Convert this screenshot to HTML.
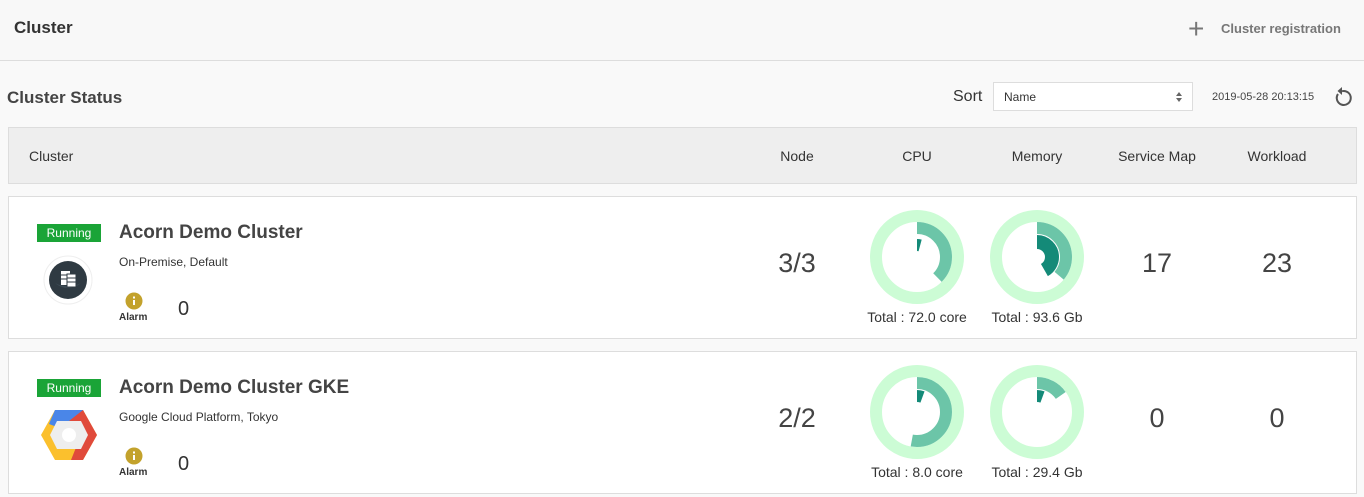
<!DOCTYPE html>
<html><head><style>
*{margin:0;padding:0;box-sizing:border-box}
body{width:1364px;height:497px;background:#f9f9f9;font-family:"Liberation Sans",sans-serif;color:#333;position:relative;overflow:hidden}
.a{position:absolute;white-space:nowrap}
.c{transform:translateX(-50%)}
.row{position:absolute;left:8px;width:1349px;height:143px;background:#fff;border:1px solid #ddd}
.run{position:absolute;background:#1aa437;color:#fff;font-size:12px;width:64px;height:18px;line-height:18px;text-align:center}
.big{font-size:27px;color:#444}
</style></head><body>
<div class="a" style="left:0;top:0;width:1364px;height:61px;border-bottom:1px solid #ddd;background:#f8f8f8"></div>
<div class="a" style="left:14px;top:18px;font-size:17px;color:#333;font-weight:bold">Cluster</div>
<div class="a" style="left:1188px;top:15px;font-size:28px;color:#777;line-height:28px">+</div>
<div class="a" style="left:1221px;top:21px;font-size:13px;color:#777;font-weight:bold">Cluster registration</div>

<div class="a" style="left:7px;top:88px;font-size:17px;font-weight:bold;color:#444">Cluster Status</div>
<div class="a" style="left:953px;top:88px;font-size:16px;color:#333">Sort</div>
<div class="a" style="left:993px;top:82px;width:200px;height:29px;background:#fff;border:1px solid #ddd;font-size:12px;line-height:28px;padding-left:10px;color:#333">Name
<svg style="position:absolute;right:10px;top:9px" width="6" height="10"><path d="M0 4L3 0L6 4Z M0 6L3 10L6 6Z" fill="#666"/></svg></div>
<div class="a" style="left:1212px;top:91px;font-size:11px;color:#444">2019-05-28 20:13:15</div>
<svg class="a" style="left:1332px;top:86px" width="22" height="22" viewBox="0 0 22 22"><path d="M6 8 A7 7 0 1 0 10 5.2" fill="none" stroke="#555" stroke-width="2"/><path d="M10 1 L10 9 L5.5 5 Z" fill="#555"/></svg>

<div class="a" style="left:8px;top:127px;width:1349px;height:57px;background:#eee;border:1px solid #ddd"></div>
<div class="a" style="left:29px;top:148px;font-size:14px">Cluster</div>
<div class="a c" style="left:797px;top:148px;font-size:14px">Node</div>
<div class="a c" style="left:917px;top:148px;font-size:14px">CPU</div>
<div class="a c" style="left:1037px;top:148px;font-size:14px">Memory</div>
<div class="a c" style="left:1157px;top:148px;font-size:14px">Service Map</div>
<div class="a c" style="left:1277px;top:148px;font-size:14px">Workload</div>

<!-- row 1 -->
<div class="row" style="top:196px"></div>
<div class="run" style="left:37px;top:224px">Running</div>
<div class="a" style="left:119px;top:222px;font-size:19px;font-weight:bold;color:#444">Acorn Demo Cluster</div>
<div class="a" style="left:119px;top:255px;font-size:12px">On-Premise, Default</div>
<svg class="a" style="left:43px;top:255px" width="52" height="52"><circle cx="25" cy="25" r="24" fill="#fff" stroke="#eee"/><circle cx="25" cy="25" r="19" fill="#2f3a42"/><path d="M12 28 A19 19 0 0 0 38 28 A19 12 0 0 1 12 28Z" fill="#3d4b55"/><rect x="18" y="16" width="9" height="14" fill="#fff"/><rect x="24" y="19" width="9" height="13" fill="#fff" stroke="#2f3a42" stroke-width="1"/><path d="M24 23h9M24 27h9M18 20h6M18 24h6" stroke="#2f3a42"/></svg>
<svg class="a" style="left:125px;top:292px" width="18" height="18"><circle cx="9" cy="9" r="8.5" fill="#c3a22c"/><rect x="8" y="8" width="2" height="5" fill="#fff"/><rect x="8" y="4.5" width="2" height="2" fill="#fff"/></svg>
<div class="a" style="left:119px;top:312px;font-size:10px;font-weight:bold">Alarm</div>
<div class="a" style="left:178px;top:298px;font-size:20px">0</div>
<div class="a c big" style="left:797px;top:248px">3/3</div>
<svg class="a" style="left:867px;top:207px" width="100" height="100"><circle cx="50" cy="50" r="41" fill="none" stroke="#ccfcd5" stroke-width="12"/><g transform="rotate(-90 50 50)"><circle cx="50" cy="50" r="29" fill="none" stroke="#6cc5a8" stroke-width="12" stroke-dasharray="68.3 999"/><circle cx="50" cy="50" r="12" fill="none" stroke="#148a78" stroke-width="12" stroke-dasharray="3.2 999"/></g></svg>
<svg class="a" style="left:987px;top:207px" width="100" height="100"><circle cx="50" cy="50" r="41" fill="none" stroke="#ccfcd5" stroke-width="12"/><g transform="rotate(-90 50 50)"><circle cx="50" cy="50" r="29" fill="none" stroke="#6cc5a8" stroke-width="12" stroke-dasharray="65.8 999"/><circle cx="50" cy="50" r="15" fill="none" stroke="#148a78" stroke-width="14" stroke-dasharray="39.3 999"/></g></svg>
<div class="a c" style="left:917px;top:309px;font-size:14px">Total : 72.0 core</div>
<div class="a c" style="left:1037px;top:309px;font-size:14px">Total : 93.6 Gb</div>
<div class="a c big" style="left:1157px;top:248px">17</div>
<div class="a c big" style="left:1277px;top:248px">23</div>

<!-- row 2 -->
<div class="row" style="top:351px"></div>
<div class="run" style="left:37px;top:379px">Running</div>
<div class="a" style="left:119px;top:377px;font-size:19px;font-weight:bold;color:#444">Acorn Demo Cluster GKE</div>
<div class="a" style="left:119px;top:410px;font-size:12px">Google Cloud Platform, Tokyo</div>
<svg class="a" style="left:41px;top:409px" width="56" height="52" viewBox="0 0 56 52"><polygon points="14,1 42,1 56,26 42,51 14,51 0,26" fill="#fbc02d"/><polygon points="42,1 56,26 42,51 30,51 40,26 28,12 14,1" fill="#e04a3b"/><polygon points="14,1 42,1 28,12 16,18 8,15" fill="#4a86e8"/><polygon points="16,12 40,12 47,26 40,40 16,40 9,26" fill="#eee"/><circle cx="28" cy="26" r="7" fill="#fff"/></svg>
<svg class="a" style="left:125px;top:447px" width="18" height="18"><circle cx="9" cy="9" r="8.5" fill="#c3a22c"/><rect x="8" y="8" width="2" height="5" fill="#fff"/><rect x="8" y="4.5" width="2" height="2" fill="#fff"/></svg>
<div class="a" style="left:119px;top:467px;font-size:10px;font-weight:bold">Alarm</div>
<div class="a" style="left:178px;top:453px;font-size:20px">0</div>
<div class="a c big" style="left:797px;top:403px">2/2</div>
<svg class="a" style="left:867px;top:362px" width="100" height="100"><circle cx="50" cy="50" r="41" fill="none" stroke="#ccfcd5" stroke-width="12"/><g transform="rotate(-90 50 50)"><circle cx="50" cy="50" r="29" fill="none" stroke="#6cc5a8" stroke-width="12" stroke-dasharray="96.2 999"/><circle cx="50" cy="50" r="16" fill="none" stroke="#148a78" stroke-width="12" stroke-dasharray="5.6 999"/></g></svg>
<svg class="a" style="left:987px;top:362px" width="100" height="100"><circle cx="50" cy="50" r="41" fill="none" stroke="#ccfcd5" stroke-width="12"/><g transform="rotate(-90 50 50)"><circle cx="50" cy="50" r="29" fill="none" stroke="#6cc5a8" stroke-width="12" stroke-dasharray="27.8 999"/><circle cx="50" cy="50" r="16" fill="none" stroke="#148a78" stroke-width="12" stroke-dasharray="5.6 999"/></g></svg>
<div class="a c" style="left:917px;top:464px;font-size:14px">Total : 8.0 core</div>
<div class="a c" style="left:1037px;top:464px;font-size:14px">Total : 29.4 Gb</div>
<div class="a c big" style="left:1157px;top:403px">0</div>
<div class="a c big" style="left:1277px;top:403px">0</div>
</body></html>
